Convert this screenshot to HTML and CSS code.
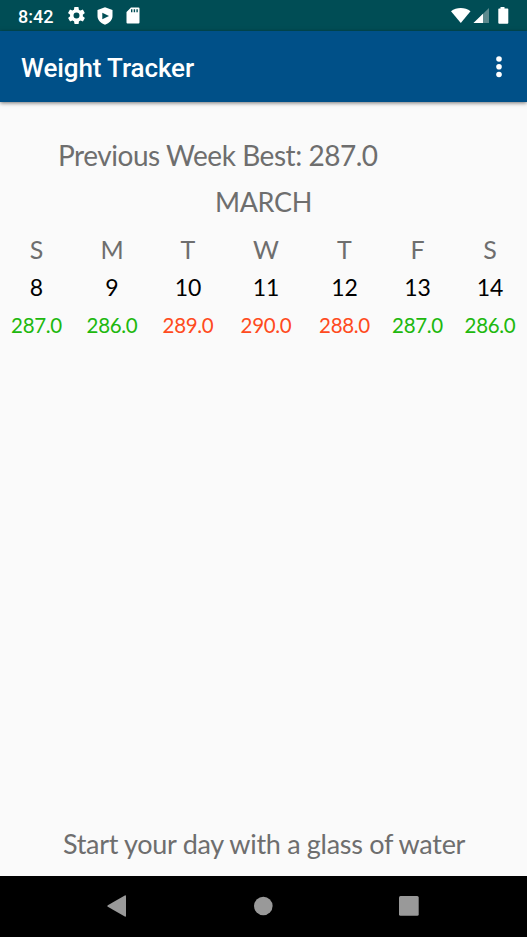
FILE: index.html
```html
<!DOCTYPE html>
<html lang="en">
<head>
<meta charset="utf-8">
<title>Weight Tracker</title>
<link rel="stylesheet" href="styles.css">
</head>
<body>
<div class="status">
  <span class="time">8:42</span>
  <svg class="gear" viewBox="2 2 20 20" width="17" height="17"><path fill="#fff" d="M19.4 13c.1-.3.1-.6.1-1s0-.7-.1-1l2.100-1.600c.2-.2.3-.4.1-.6l-2-3.500c-.1-.2-.4-.3-.6-.2l-2.500 1c-.5-.4-1.100-.7-1.700-1l-.4-2.600c0-.3-.2-.5-.5-.5h-4c-.2 0-.5.2-.5.4l-.4 2.700c-.6.2-1.100.6-1.700 1l-2.500-1c-.2-.1-.5 0-.6.2l-2 3.500c-.1.2-.1.5.1.6L4.500 11c0 .3-.1.6-.1 1s0 .7.1 1l-2.100 1.600c-.2.200-.3.400-.1.600l2 3.500c.1.200.4.300.6.200l2.500-1c.5.400 1.100.7 1.700 1l.4 2.600c0 .300.2.500.5.500h4c.300 0 .5-.2.5-.4l.4-2.700c.6-.2 1.200-.6 1.700-1l2.500 1c.2.100.5 0 .6-.2l2-3.500c.1-.2.100-.5-.1-.6zM12 15.500a3.500 3.500 0 1 1 0-7 3.500 3.500 0 0 1 0 7z"/></svg>
  <svg class="shield" viewBox="0 0 16 18" width="16" height="18"><path fill="#fff" fill-rule="evenodd" d="M8 .3 15.500 3v6c0 4-3 7.200-7.500 8.700C3.500 16.200.5 13 .5 9V3zM5.300 5.700v6.600L12 9z"/></svg>
  <svg class="card" viewBox="0 0 14 17" width="14" height="17"><path fill="#fff" fill-rule="evenodd" d="M5 .5h7.500q1 0 1 1v14q0 1-1 1h-11q-1 0-1-1V5zM5 2.200v3h1.400v-3zm2.700 0v3h1.400v-3zm2.700 0v3h1.400v-3z"/></svg>
  <svg class="signals" viewBox="0 0 60 20" width="60" height="20"><path fill="#fff" d="M1 5.200C6.500.9 15 .9 20.500 5.200L10.800 17z"/><path fill="#5d8a8e" d="M39 2v15H23.500z"/><path fill="#fff" d="M33 7.800V17h-9.500z"/><path fill="#fff" d="M50.500 1h4v1.500h3q.8 0 .8.800v13.400q0 1-1 1h-8q-1 0-1-1V3.300q0-.8.8-.8h1.400z"/></svg>
</div>
<header class="appbar">
  <h1>Weight Tracker</h1>
  <svg viewBox="0 0 6 22" width="6" height="22"><g fill="#fff"><circle cx="3" cy="3" r="2.800"/><circle cx="3" cy="10.800" r="2.800"/><circle cx="3" cy="18.500" r="2.800"/></g></svg>
</header>
<main>
  <p class="best">Previous Week Best: 287.0</p>
  <p class="month">MARCH</p>
  <div class="week">
    <div class="day"><span class="name">S</span><span class="date">8</span><span class="good">287.0</span></div>
    <div class="day"><span class="name">M</span><span class="date">9</span><span class="good">286.0</span></div>
    <div class="day"><span class="name">T</span><span class="date">10</span><span class="over">289.0</span></div>
    <div class="day"><span class="name">W</span><span class="date">11</span><span class="over">290.0</span></div>
    <div class="day"><span class="name">T</span><span class="date">12</span><span class="over">288.0</span></div>
    <div class="day"><span class="name">F</span><span class="date">13</span><span class="good">287.0</span></div>
    <div class="day"><span class="name">S</span><span class="date">14</span><span class="good">286.0</span></div>
  </div>
  <p class="tip">Start your day with a glass of water</p>
</main>
<nav class="nav">
  <svg viewBox="0 0 20 22" width="20" height="22"><path fill="#999" d="M.8 10.200 17.800.5q1.200-.5 1.200.7v19.600q0 1.200-1.200.7L.8 11.800q-1-.8 0-1.600z"/></svg>
  <svg viewBox="0 0 20 20" width="20" height="20"><circle cx="10.300" cy="10" r="9.300" fill="#999"/></svg>
  <svg viewBox="0 0 20 20" width="20" height="20"><rect width="19.700" height="19.700" rx="1.500" fill="#999"/></svg>
</nav>
</body>
</html>
```
FILE: styles.css
```css
* { box-sizing: border-box; }
body {
  margin: 0;
  height: 937px;
  display: flex;
  flex-direction: column;
  overflow: hidden;
  background: #fafafa;
  font-family: Roboto, sans-serif;
}
svg { display: block; flex: none; }
.status {
  height: 31px;
  display: flex;
  align-items: center;
  padding: 0 17px 0 18px;
  background: #004d55;
  color: #fff;
}
.time { width: 50px; font-size: 18px; font-weight: 500; line-height: 31px; padding-top: 1px; }
.shield { margin-left: 12px; }
.card { margin-left: 13px; }
.signals { margin-left: auto; }
.appbar {
  position: relative;
  height: 71px;
  display: flex;
  align-items: center;
  justify-content: space-between;
  padding: 0 25px 0 21px;
  background: #005088;
  color: #fff;
  box-shadow: 0 1px 4px rgba(0, 0, 0, .55);
}
h1 { margin: 2px 0 0; font-size: 26px; font-weight: 500; line-height: 32px; letter-spacing: -.1px; }
main {
  flex: 1;
  display: flex;
  flex-direction: column;
  font-family: Lato, sans-serif;
  color: #6e6e6e;
}
p { margin: 0; white-space: nowrap; }
.best { margin: 35px 0 0 58px; font-size: 28px; line-height: 36px; letter-spacing: -.46px; }
.month { margin-top: 11px; text-align: center; font-size: 27px; line-height: 36px; letter-spacing: -.3px; }
.week {
  display: grid;
  grid-template-columns: 73px 78px 74px 82px 75px 71px 74px;
  margin-top: 10px;
}
.day { display: flex; flex-direction: column; align-items: center; line-height: 38px; }
.name { font-size: 25px; }
.date { font-size: 23px; color: #000; }
.good, .over { font-size: 20.5px; letter-spacing: -.3px; }
.good { color: #20b80d; }
.over { color: #ff4a20; }
.tip { margin: auto 0 14px 63px; font-size: 27px; line-height: 36px; letter-spacing: -.3px; }
.nav {
  height: 61px;
  display: flex;
  align-items: center;
  justify-content: space-between;
  padding: 0 108px 1px 107px;
  background: #000;
}
```
